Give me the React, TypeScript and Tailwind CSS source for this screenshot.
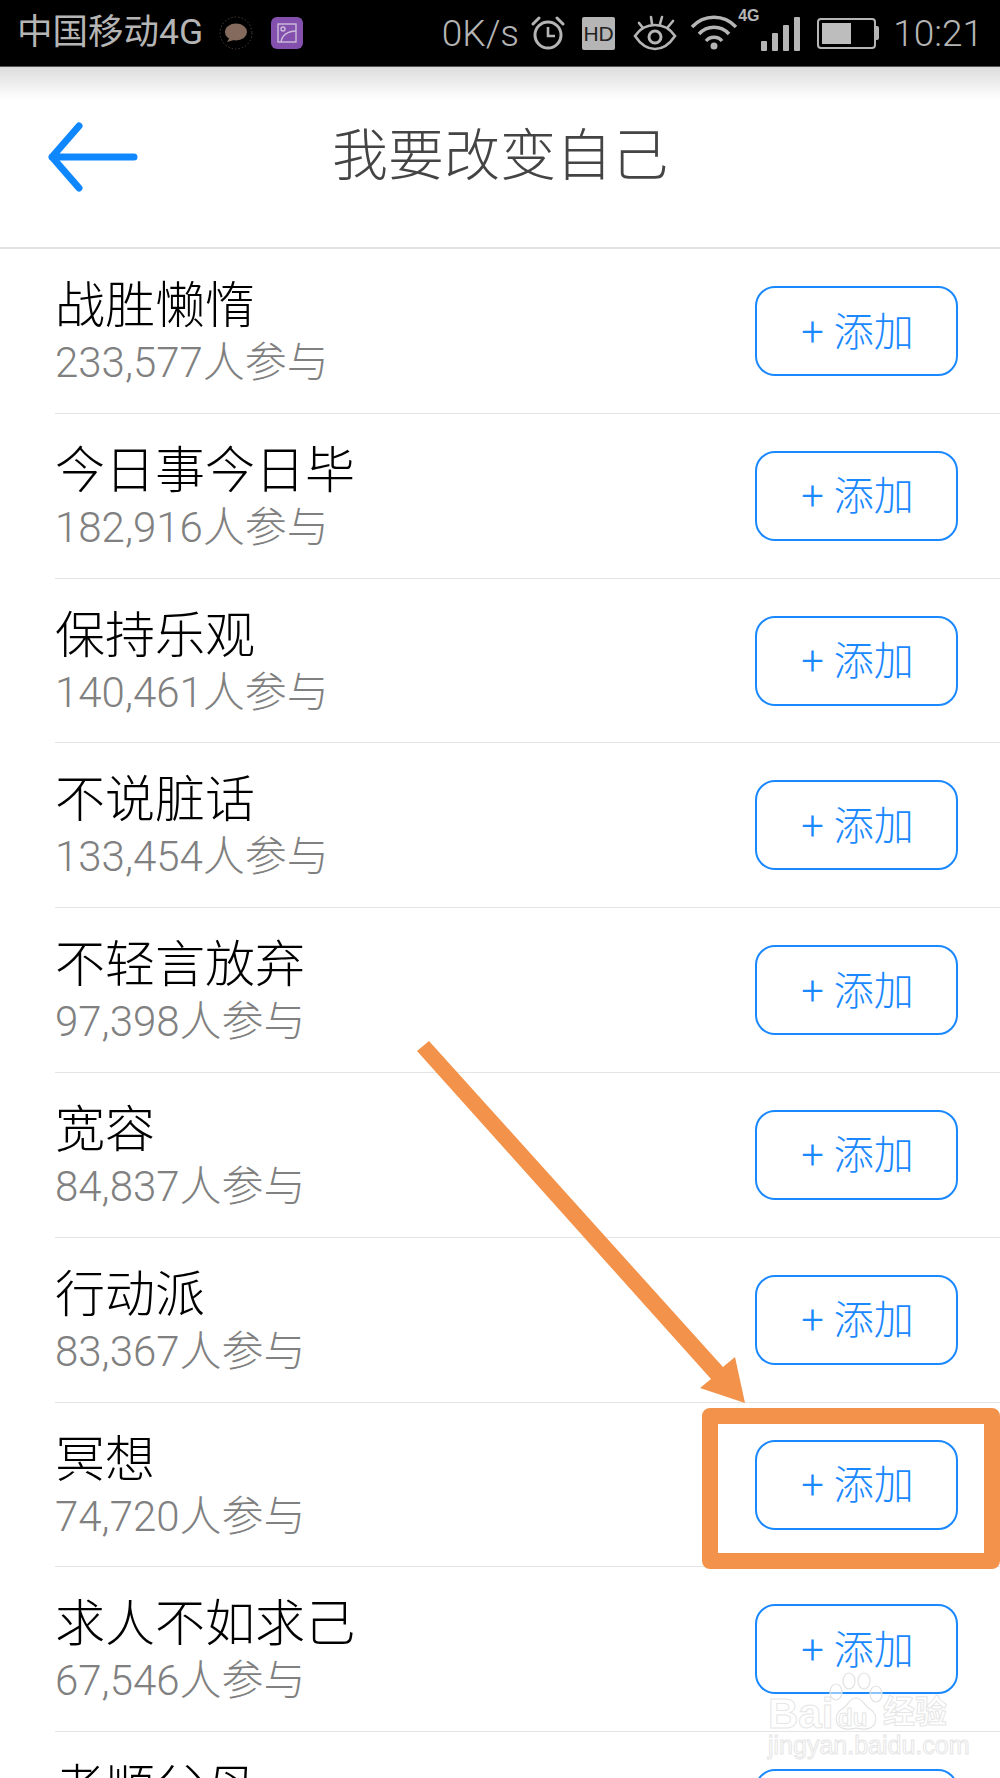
import React from 'react';

const items = [
  { name: '战胜懒惰', count: '233,577人参与' },
  { name: '今日事今日毕', count: '182,916人参与' },
  { name: '保持乐观', count: '140,461人参与' },
  { name: '不说脏话', count: '133,454人参与' },
  { name: '不轻言放弃', count: '97,398人参与' },
  { name: '宽容', count: '84,837人参与' },
  { name: '行动派', count: '83,367人参与' },
  { name: '冥想', count: '74,720人参与' },
  { name: '求人不如求己', count: '67,546人参与' },
  { name: '孝顺父母', count: '' },
];

function StatusIcons() {
  return (
    <div className="flex items-center">
      {/* alarm */}
      <svg width="34" height="36" viewBox="0 0 34 36" fill="none" stroke="#b5b5b5" strokeWidth="3" className="ml-[12px]">
        <circle cx="17" cy="20" r="13" />
        <path d="M17 12v9h7" strokeWidth="2.6" />
        <path d="M2 9l6-6M32 9l-6-6" strokeLinecap="round" />
      </svg>
      {/* HD */}
      <div className="ml-[17px] flex h-[33px] w-[33px] items-center justify-center rounded-[2px] bg-[#b5b5b5] text-[21px] leading-none text-[#222]">
        HD
      </div>
      {/* eye */}
      <svg width="44" height="36" viewBox="0 0 44 36" fill="none" stroke="#b5b5b5" strokeWidth="2.6" className="ml-[18px]">
        <path d="M2 21C8 12 15 10 22 10s14 2 20 11C36 30 29 34 22 34S8 30 2 21Z" />
        <circle cx="22" cy="22" r="6" strokeWidth="3" />
        <path d="M6 8l4 5M18 2l1 7M29 2l-2 7M40 6l-5 6" strokeLinecap="round" />
      </svg>
      {/* wifi */}
      <svg width="48" height="36" viewBox="0 0 48 36" fill="none" stroke="#b5b5b5" strokeWidth="3.4" className="ml-[13px]">
        <path d="M2 12C14 -1 34 -1 46 12" />
        <path d="M9 19C17 10 31 10 39 19" />
        <path d="M16 26C20 21 28 21 32 26" />
        <circle cx="24" cy="31" r="3.5" fill="#b5b5b5" stroke="none" />
      </svg>
      {/* signal */}
      <div className="relative flex h-[36px] w-[62px] items-end justify-end gap-[5px]">
        <span className="absolute left-0 top-[-7px] text-[16px] font-bold leading-none text-[#b5b5b5]">4G</span>
        <span className="h-[10px] w-[6px] rounded-[1px] bg-[#b5b5b5]" />
        <span className="h-[18px] w-[6px] rounded-[1px] bg-[#b5b5b5]" />
        <span className="h-[26px] w-[6px] rounded-[1px] bg-[#b5b5b5]" />
        <span className="h-[34px] w-[6px] rounded-[1px] bg-[#b5b5b5]" />
      </div>
      {/* battery */}
      <div className="ml-[17px] flex items-center">
        <div className="flex h-[31px] w-[59px] items-stretch rounded-[4px] border-2 border-[#b5b5b5] p-[3px]">
          <div className="w-[29px] bg-[#bdbdbd]" />
        </div>
        <div className="h-[14px] w-[3px] rounded-r-[2px] bg-[#b5b5b5]" />
      </div>
      <span className="ml-[14px] font-['Roboto',sans-serif] text-[37px] font-light leading-none text-[#b5b5b5]">10:21</span>
    </div>
  );
}

function Row({ name, count }: { name: string; count: string }) {
  return (
    <div className="flex h-[164.8px] shrink-0 items-start justify-between border-b border-[#e4e4e4] pr-[42px]">
      <div className="pt-[26px]">
        <div className="text-[50px] font-light leading-[62px] text-black">{name}</div>
        <div className="mt-[1px] font-['Roboto','Noto_Sans_CJK_SC',sans-serif] text-[42px] font-light leading-[50px] text-[#808080]">{count}</div>
      </div>
      <button className="mt-[37px] flex h-[90px] w-[203px] items-center justify-center rounded-[20px] border-2 border-[#1a88ff] pt-[3px] pl-[2px] font-['Roboto','Noto_Sans_CJK_SC',sans-serif] text-[40px] font-light leading-none text-[#1a88ff]">
        + 添加
      </button>
    </div>
  );
}

export default function App() {
  return (
    <div className="relative h-[1778px] w-[1000px] overflow-hidden bg-white font-['Liberation_Sans','Noto_Sans_CJK_SC',sans-serif]">
      {/* Status bar */}
      <div className="flex h-[67px] items-center justify-between border-b border-[#555] bg-black pl-[17px] pr-[17px]">
        <div className="flex items-center">
          <span className="font-['Roboto','Noto_Sans_CJK_SC',sans-serif] text-[35.5px] leading-none text-[#b5b5b5]">中国移动4G</span>
          <svg width="34" height="34" viewBox="0 0 34 34" className="ml-[16px]">
            <circle cx="17" cy="17" r="16" fill="none" stroke="#4a3f38" strokeWidth="1" strokeDasharray="1.5 2" />
            <ellipse cx="17" cy="16" rx="11" ry="8.5" fill="#836a5c" />
            <path d="M11 21l-3 5 7-2z" fill="#836a5c" />
          </svg>
          <div className="ml-[18px] flex h-[32px] w-[32px] items-center justify-center rounded-[6px] bg-[#8350ad]">
            <svg width="20" height="20" viewBox="0 0 20 20" fill="none" stroke="#cdbcdc" strokeWidth="1.4">
              <rect x="1" y="1" width="18" height="18" />
              <circle cx="6" cy="6" r="2" />
              <path d="M4 19C5 12 11 8 19 8" />
            </svg>
          </div>
        </div>
        <div className="flex items-center">
          <span className="font-['Roboto',sans-serif] text-[37px] font-light leading-none text-[#b5b5b5]">0K/s</span>
          <StatusIcons />
        </div>
      </div>

      {/* Header */}
      <div className="relative flex h-[182px] items-center justify-center border-b-2 border-[#e2e2e2] bg-gradient-to-b from-[#dcdcdc] via-white via-[18%] to-white">
        <svg width="92" height="70" viewBox="0 0 92 70" fill="none" stroke="#0f87ff" strokeWidth="7" strokeLinecap="round" strokeLinejoin="round" className="absolute left-[46px] top-[55px]">
          <path d="M88 35H6M33 4L6 35l27 31" />
        </svg>
        <h1 className="mt-[-2px] text-[56px] font-light leading-none text-[#444]">我要改变自己</h1>
      </div>

      {/* List */}
      <div className="flex flex-col pl-[55px]">
        {items.map((item) => (
          <Row key={item.name} name={item.name} count={item.count} />
        ))}
      </div>

      {/* Orange annotation */}
      <div className="absolute left-[702px] top-[1408px] h-[161px] w-[298px] rounded-[8px] border-[16px] border-[#f3934b]" />
      <svg width="1000" height="1778" viewBox="0 0 1000 1778" className="pointer-events-none absolute left-0 top-0">
        <polygon points="429,1041 723,1367 735,1357 745,1403 700,1388 711,1379 417,1051" fill="#f3934b" />
      </svg>

      {/* Baidu watermark */}
      <div className="pointer-events-none absolute left-[768px] top-[1672px] w-[180px] font-bold text-white/60 [-webkit-text-stroke:1px_#e6e6e6]">
        <svg width="56" height="62" viewBox="0 0 56 62" fill="none" stroke="#e2e2e2" strokeWidth="1.2" className="absolute left-[60px] top-0">
          <ellipse cx="8" cy="20" rx="6" ry="8" fill="#ffffff80" />
          <ellipse cx="21" cy="9" rx="6" ry="8" fill="#ffffff80" />
          <ellipse cx="36" cy="9" rx="6" ry="8" fill="#ffffff80" />
          <ellipse cx="48" cy="22" rx="6" ry="8" fill="#ffffff80" />
          <path d="M28 26c-7 0-8 8-14 11-6 4-7 8-5 14 3 7 12 7 19 5 7 2 16 2 19-5 2-6 1-10-5-14-6-3-7-11-14-11Z" fill="#ffffff80" />
        </svg>
        <div className="absolute left-0 top-[24px] text-[42px] leading-[36px]">Bai</div>
        <div className="absolute left-[70px] top-[34px] text-[24px] leading-none">du</div>
        <div className="absolute left-[115px] top-[24px] whitespace-nowrap text-[32px] leading-none">经验</div>
        <div className="absolute left-0 top-[61px] whitespace-nowrap text-[25px] font-normal leading-none">jingyan.baidu.com</div>
      </div>
    </div>
  );
}
